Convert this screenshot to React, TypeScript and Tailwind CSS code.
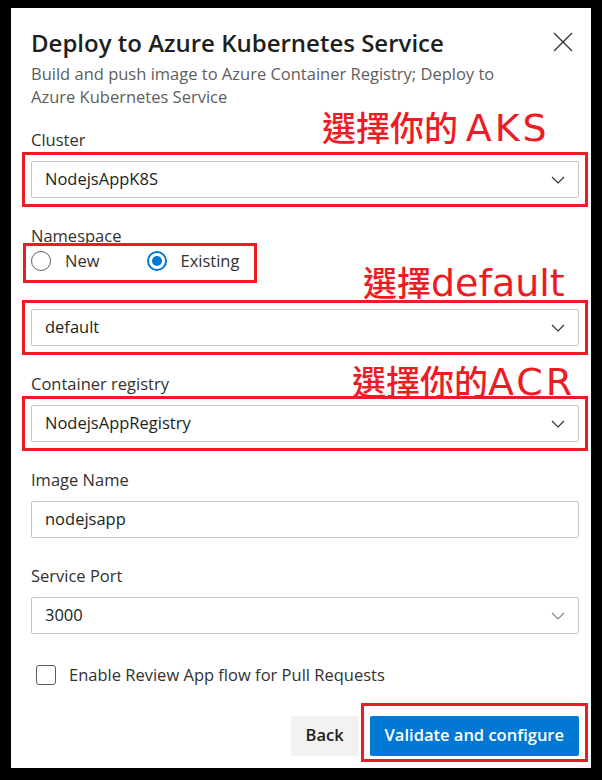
import React from 'react'

const Chevron = ({ muted = false }: { muted?: boolean }) => (
  <svg width="14" height="8" viewBox="0 0 14 8" fill="none">
    <path d="M1 1L7 7L13 1" stroke={muted ? '#8a8886' : '#323130'} strokeWidth="1.2" />
  </svg>
)

const RedBox = ({ className }: { className: string }) => (
  <div className={`pointer-events-none absolute border-[3px] border-[#ed1c24] ${className}`} />
)

const Select = ({ value, muted = false }: { value: string; muted?: boolean }) => (
  <div className="flex h-[37px] items-center justify-between rounded-[2px] border border-[#c8c6c4] pl-[13px] pr-[13px] text-[16.5px] text-[#201f1e]">
    <span>{value}</span>
    <Chevron muted={muted} />
  </div>
)

const Label = ({ children }: { children: React.ReactNode }) => (
  <div className="h-[22px] text-[16.5px] leading-[22px] text-[#323130]">{children}</div>
)

const Note = ({ children, className }: { children: React.ReactNode; className: string }) => (
  <div
    className={`pointer-events-none absolute whitespace-nowrap font-['Noto_Sans_CJK_TC',sans-serif] text-[34px] font-medium leading-none text-[#ed1c24] ${className}`}
  >
    {children}
  </div>
)

const Latin = ({ children, wide = false }: { children: React.ReactNode; wide?: boolean }) => (
  <span
    className={`font-['DejaVu_Sans',sans-serif] text-[38px] font-normal leading-[0] ${wide ? 'tracking-[3px]' : ''}`}
  >
    {children}
  </span>
)

export default function App() {
  return (
    <div className="min-h-[780px] w-[602px] bg-black pl-[11px] pt-[8px] font-['Open_Sans',sans-serif]">
      <div className="relative h-[760px] w-[580px] bg-white pl-5 pr-3 pt-[19px]">
        {/* header */}
        <div className="flex items-start justify-between">
          <div>
            <h1 className="text-[24px] font-semibold leading-[32px] text-[#201f1e]">
              Deploy to Azure Kubernetes Service
            </h1>
            <p className="mt-[3px] max-w-[490px] text-[16.5px] leading-[23px] text-[#605e5c]">
              Build and push image to Azure Container Registry; Deploy to Azure Kubernetes Service
            </p>
          </div>
          <button className="mr-[6px] mt-[5px] text-[#323130]">
            <svg width="20" height="20" viewBox="0 0 20 20" fill="none">
              <path d="M1 1L19 19M19 1L1 19" stroke="#323130" strokeWidth="1.3" />
            </svg>
          </button>
        </div>

        {/* cluster */}
        <div className="mt-[21px]">
          <Label>Cluster</Label>
          <div className="relative mt-[10px]">
            <Select value="NodejsAppK8S" />
            <RedBox className="-inset-x-[9px] -inset-y-[9px]" />
          </div>
        </div>

        {/* namespace */}
        <div className="mt-[27px]">
          <Label>Namespace</Label>
          <div className="relative mt-[3px] flex h-[22px] items-center text-[16.5px] text-[#323130]">
            <span className="h-5 w-5 rounded-full border border-[#605e5c]" />
            <span className="ml-[14px]">New</span>
            <span className="ml-[48px] flex h-5 w-5 items-center justify-center rounded-full border-2 border-[#0078d4]">
              <span className="h-[10px] w-[10px] rounded-full bg-[#0078d4]" />
            </span>
            <span className="ml-[13px]">Existing</span>
            <RedBox className="-left-[8px] -top-[7px] h-[40px] w-[234px]" />
          </div>
          <div className="relative mt-[37px]">
            <Select value="default" />
            <RedBox className="-inset-x-[9px] -inset-y-[9px]" />
          </div>
        </div>

        {/* registry */}
        <div className="mt-[27px]">
          <Label>Container registry</Label>
          <div className="relative mt-[10px]">
            <Select value="NodejsAppRegistry" />
            <RedBox className="-inset-x-[9px] -inset-y-[9px]" />
          </div>
        </div>

        {/* image name */}
        <div className="mt-[27px]">
          <Label>Image Name</Label>
          <div className="mt-[10px] flex h-[37px] items-center rounded-[2px] border border-[#c8c6c4] pl-[13px] text-[16.5px] text-[#201f1e]">
            nodejsapp
          </div>
        </div>

        {/* service port */}
        <div className="mt-[27px]">
          <Label>Service Port</Label>
          <div className="mt-[10px]">
            <Select value="3000" muted />
          </div>
        </div>

        {/* review app */}
        <div className="ml-[5px] mt-[29px] flex items-center text-[16.5px] text-[#323130]">
          <span className="h-5 w-5 rounded-[3px] border border-[#605e5c]" />
          <span className="ml-[13px]">Enable Review App flow for Pull Requests</span>
        </div>

        {/* actions */}
        <div className="mt-[28px] flex justify-end gap-[11px]">
          <button className="h-10 rounded-[2px] bg-[#f3f2f1] px-[15px] text-[16.5px] font-semibold text-[#201f1e]">
            Back
          </button>
          <div className="relative">
            <button className="h-10 rounded-[2px] bg-[#0078d4] px-[15px] text-[16.5px] font-semibold text-white">
              Validate and configure
            </button>
            <RedBox className="-bottom-[6px] -left-[9px] -right-[9px] -top-[13px]" />
          </div>
        </div>

        <Note className="left-[311px] top-[102px]">
          選擇你的 <Latin wide>AKS</Latin>
        </Note>
        <Note className="left-[352px] top-[257px]">
          選擇<Latin>default</Latin>
        </Note>
        <Note className="left-[341px] top-[356px]">
          選擇你的<Latin wide>ACR</Latin>
        </Note>
      </div>
    </div>
  )
}
